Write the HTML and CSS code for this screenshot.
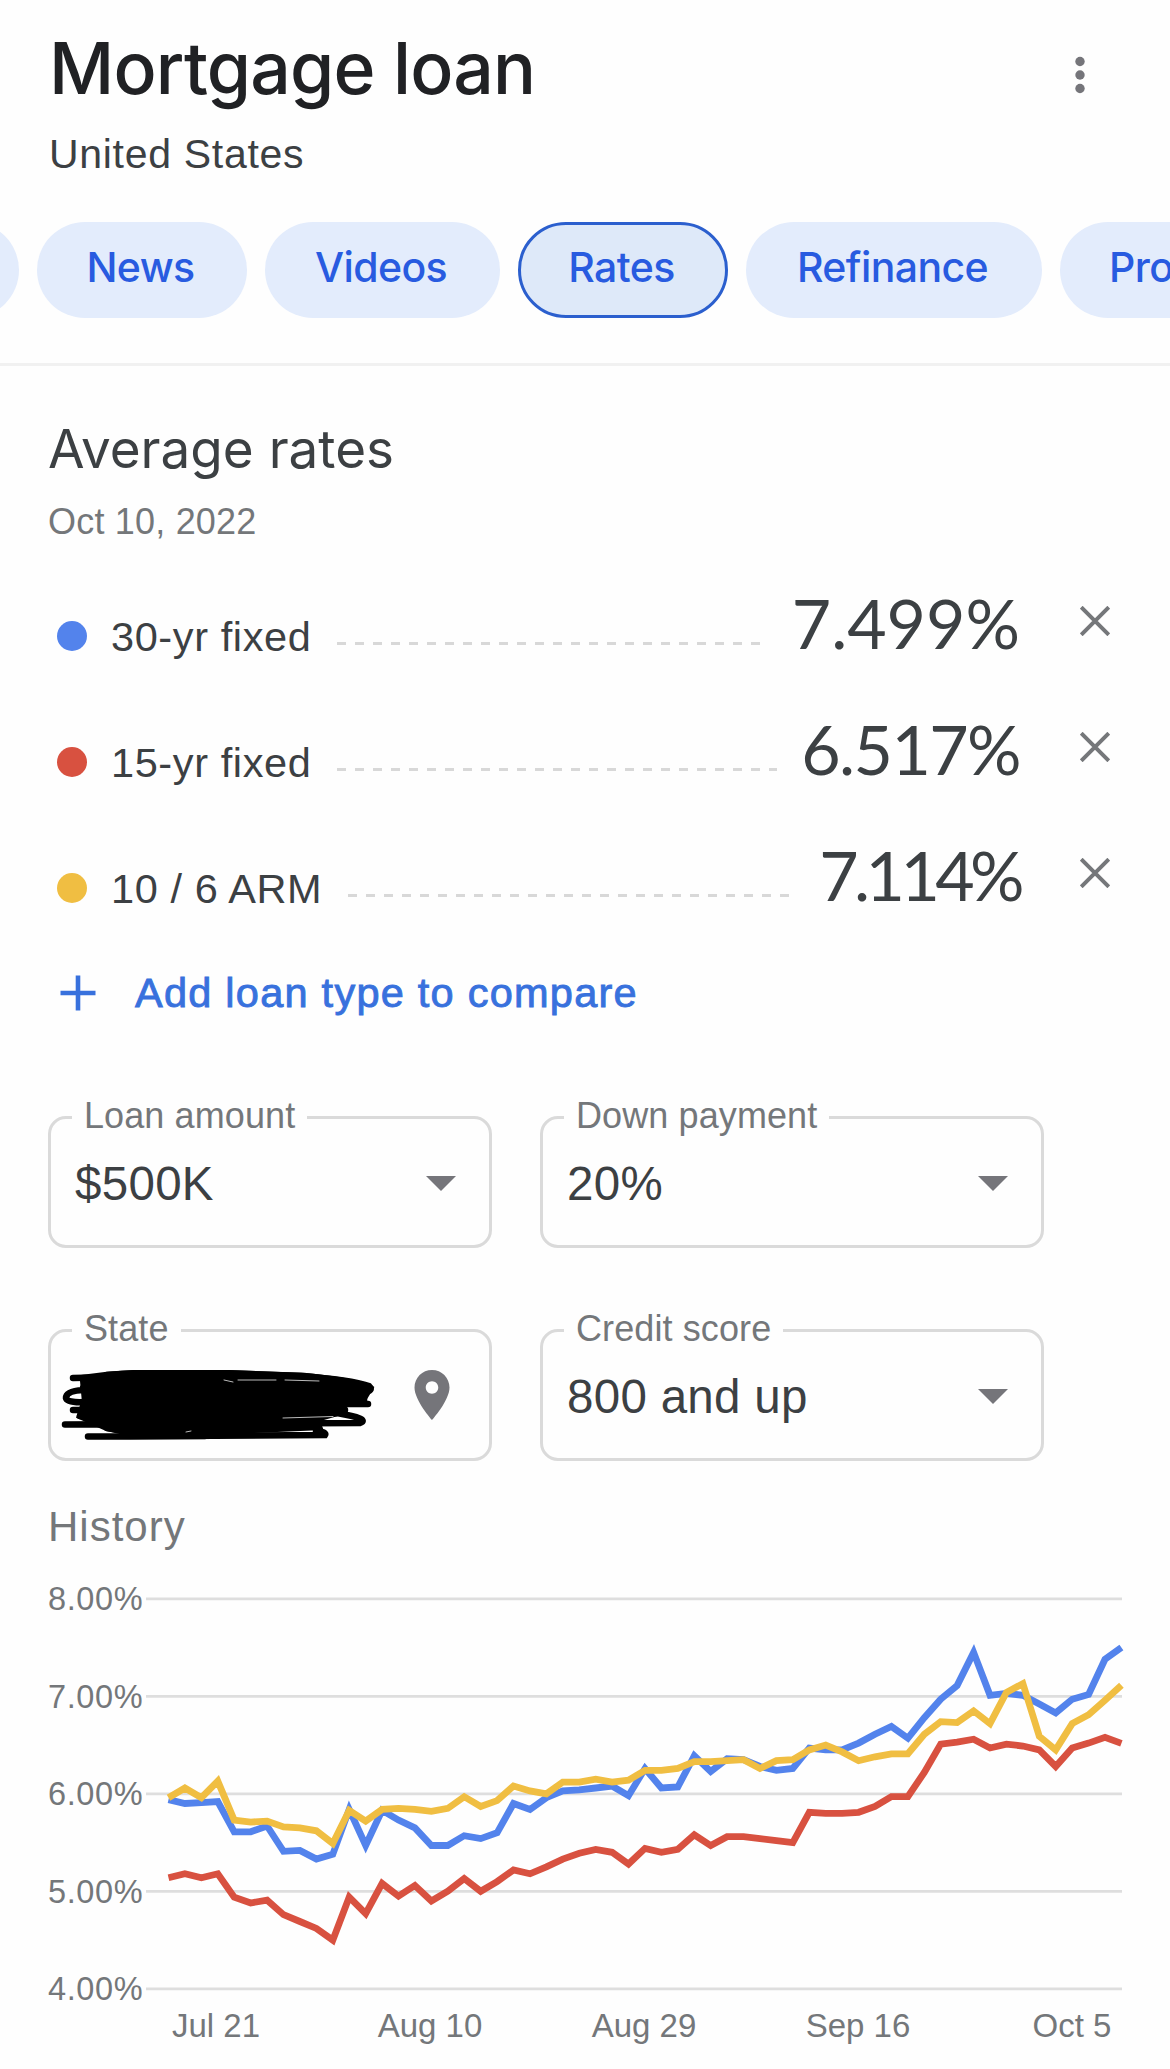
FILE: index.html
```html
<!DOCTYPE html>
<html lang="en">
<head>
    <meta charset="UTF-8">
    <meta name="viewport" content="width=device-width, initial-scale=1.0">
    <title>Mortgage loan</title>
    <link rel="stylesheet" href="styles.css">
</head>
<body>
    <header class="header">
        <div>
            <h1>Mortgage loan</h1>
            <p class="region">United States</p>
        </div>
        <svg class="menu-icon" width="10" height="38" viewBox="0 0 10 38">
            <circle cx="5" cy="5.5" r="4.7"/>
            <circle cx="5" cy="19" r="4.7"/>
            <circle cx="5" cy="32.5" r="4.7"/>
        </svg>
    </header>

    <nav class="chips">
        <a class="chip"></a>
        <a class="chip chip-sm">News</a>
        <a class="chip chip-md">Videos</a>
        <a class="chip chip-sm active">Rates</a>
        <a class="chip chip-lg">Refinance</a>
        <a class="chip chip-last">Pro</a>
    </nav>

    <main class="content">
        <h2>Average rates</h2>
        <p class="date">Oct 10, 2022</p>

        <div class="rates">
            <div class="rate-row">
                <span class="dot blue"></span>
                <span class="rate-name">30-yr fixed</span>
                <span class="leader"></span>
                <span class="rate-value">7.499%</span>
                <svg class="close" width="30" height="30" viewBox="0 0 30 30"><path d="M1.2 1.2L28.8 28.8M28.8 1.2L1.2 28.8"/></svg>
            </div>
            <div class="rate-row">
                <span class="dot red"></span>
                <span class="rate-name">15-yr fixed</span>
                <span class="leader"></span>
                <span class="rate-value tight">6.517%</span>
                <svg class="close" width="30" height="30" viewBox="0 0 30 30"><path d="M1.2 1.2L28.8 28.8M28.8 1.2L1.2 28.8"/></svg>
            </div>
            <div class="rate-row">
                <span class="dot yellow"></span>
                <span class="rate-name">10 / 6 ARM</span>
                <span class="leader"></span>
                <span class="rate-value tighter">7.114%</span>
                <svg class="close" width="30" height="30" viewBox="0 0 30 30"><path d="M1.2 1.2L28.8 28.8M28.8 1.2L1.2 28.8"/></svg>
            </div>
        </div>

        <a class="add-loan">
            <svg width="36" height="36" viewBox="0 0 36 36"><path d="M18 .5V35.5M.5 18H35.5"/></svg>
            <span>Add loan type to compare</span>
        </a>

        <form class="fields">
            <fieldset class="field">
                <legend>Loan amount</legend>
                <div class="field-body">
                    <span>$500K</span>
                    <svg class="arrow" width="30" height="15" viewBox="0 0 30 15"><path d="M0 0H30L15 15Z"/></svg>
                </div>
            </fieldset>
            <fieldset class="field">
                <legend>Down payment</legend>
                <div class="field-body">
                    <span>20%</span>
                    <svg class="arrow" width="30" height="15" viewBox="0 0 30 15"><path d="M0 0H30L15 15Z"/></svg>
                </div>
            </fieldset>
            <fieldset class="field">
                <legend>State</legend>
                <div class="field-body state-body">
                    <svg class="scribble" width="315" height="72" viewBox="0 0 315 72">
                        <path class="ink" d="M22 8L46 5Q110 0 160 3L243 6Q300 12 309 18L303 28L285 32L276 43L255 49L258 57L140 62L60 61L46 58L19 46L24 30Z"/>
                        <path d="M12 8L60 7M46 5Q100 1 160 3L240 6Q290 10 308 16Q313 21 303 22L22 18M303 22V29L40 27M22 20Q5 21 5 28Q6 33 24 32M307 34L30 34M12 40L284 40M19 46L276 43Q310 49 299 53L4 54.5M46 58Q70 62 100 61L257 56M27 66.5L264 65Q266 62 255 61M27 66.5H144"/>
                        <path class="gap" d="M163 10L172 12M177 10L215 10M224 10L258 11M222 48L272 46.5M125 62L130 61"/>
                    </svg>
                    <svg class="pin" width="36" height="50" viewBox="5 2 14 20"><path d="M12 2C8.13 2 5 5.13 5 9c0 5.25 7 13 7 13s7-7.75 7-13c0-3.87-3.13-7-7-7zm0 9.5c-1.38 0-2.5-1.12-2.5-2.5s1.12-2.5 2.5-2.5 2.5 1.12 2.5 2.5-1.12 2.5-2.5 2.5z"/></svg>
                </div>
            </fieldset>
            <fieldset class="field">
                <legend>Credit score</legend>
                <div class="field-body">
                    <span>800 and up</span>
                    <svg class="arrow" width="30" height="15" viewBox="0 0 30 15"><path d="M0 0H30L15 15Z"/></svg>
                </div>
            </fieldset>
        </form>

        <h3>History</h3>
    </main>

    <svg class="chart" id="chart" width="1170" height="516" viewBox="0 0 1170 516"></svg>

    <script>
        const series = [
            { name: 'blue', rates: [5.94, 5.90, 5.91, 5.92, 5.61, 5.61, 5.67, 5.41, 5.42, 5.33, 5.38, 5.84, 5.47, 5.83, 5.73, 5.65, 5.47, 5.47, 5.57, 5.54, 5.60, 5.90, 5.84, 5.96, 6.03, 6.04, 6.06, 6.08, 5.98, 6.26, 6.06, 6.07, 6.39, 6.23, 6.36, 6.35, 6.28, 6.24, 6.26, 6.47, 6.45, 6.45, 6.52, 6.61, 6.69, 6.57, 6.78, 6.97, 7.11, 7.45, 7.01, 7.03, 7.01, 6.92, 6.83, 6.97, 7.02, 7.38, 7.499] },
            { name: 'red', rates: [5.14, 5.18, 5.14, 5.18, 4.94, 4.88, 4.91, 4.76, 4.69, 4.62, 4.50, 4.94, 4.77, 5.08, 4.95, 5.06, 4.90, 5.00, 5.13, 5.00, 5.10, 5.22, 5.18, 5.25, 5.33, 5.39, 5.43, 5.40, 5.28, 5.44, 5.40, 5.43, 5.58, 5.47, 5.56, 5.56, 5.54, 5.52, 5.50, 5.81, 5.80, 5.80, 5.81, 5.87, 5.97, 5.97, 6.22, 6.51, 6.53, 6.56, 6.47, 6.51, 6.49, 6.45, 6.28, 6.47, 6.52, 6.58, 6.517] },
            { name: 'yellow', rates: [5.96, 6.06, 5.96, 6.13, 5.73, 5.71, 5.72, 5.66, 5.65, 5.62, 5.49, 5.83, 5.72, 5.84, 5.85, 5.84, 5.82, 5.85, 5.97, 5.87, 5.93, 6.08, 6.03, 6.00, 6.12, 6.12, 6.15, 6.12, 6.14, 6.24, 6.24, 6.26, 6.33, 6.33, 6.34, 6.35, 6.26, 6.34, 6.35, 6.45, 6.50, 6.43, 6.34, 6.38, 6.41, 6.41, 6.61, 6.74, 6.73, 6.85, 6.72, 7.04, 7.13, 6.59, 6.45, 6.72, 6.81, 6.96, 7.114] }
        ];
        const dates = [['Jul 21', 216], ['Aug 10', 430], ['Aug 29', 644], ['Sep 16', 858], ['Oct 5', 1072]];

        const left = 168.5;
        const step = 16.43;
        const y = rate => 46.8 + (8 - rate) * 97.5;

        let svg = '';
        for (let rate = 8; rate >= 4; rate--) {
            svg += `<line class="grid" x1="146" x2="1122" y1="${y(rate)}" y2="${y(rate)}"/>`;
            svg += `<text class="y-label" x="48" y="${y(rate) + 11.5}">${rate.toFixed(2)}%</text>`;
        }
        for (const s of series) {
            const points = s.rates.map((r, i) => `${(left + i * step).toFixed(1)},${y(r).toFixed(1)}`).join(' ');
            svg += `<polyline class="line ${s.name}" points="${points}"/>`;
        }
        for (const [label, x] of dates) {
            svg += `<text class="x-label" x="${x}" y="485">${label}</text>`;
        }
        document.getElementById('chart').innerHTML = svg;
    </script>
</body>
</html>
```
FILE: styles.css
```css
* {
    margin: 0;
    padding: 0;
    box-sizing: border-box;
}

body {
    width: 1170px;
    background: #fefefe;
    font-family: "Liberation Sans", Arial, sans-serif;
    color: #3c4043;
    overflow: hidden;
}

.header {
    display: flex;
    justify-content: space-between;
    height: 222px;
    padding: 28px 85px 0 49px;
}

h1 {
    font-family: Inter, sans-serif;
    font-size: 71.5px;
    font-weight: 500;
    line-height: 80px;
    letter-spacing: -0.8px;
    color: #202124;
}

.region {
    margin-top: 22px;
    font-size: 41px;
    line-height: 48px;
    letter-spacing: 0.7px;
}

.menu-icon {
    margin-top: 28px;
    fill: #75757a;
}

.chips {
    display: flex;
    gap: 18px;
    height: 144px;
    margin-left: -101px;
    overflow: hidden;
    border-bottom: 3px solid #f1f1f1;
}

.chip {
    flex: none;
    width: 120px;
    height: 96px;
    padding: 0 3px 5px 0;
    border-radius: 48px;
    background: #e3ecfc;
    font-family: Inter, sans-serif;
    font-size: 41px;
    font-weight: 500;
    line-height: 91px;
    letter-spacing: -0.6px;
    text-align: center;
    color: #285be0;
}

.chip-sm {
    width: 210px;
}

.chip-md {
    width: 235px;
}

.chip-lg {
    width: 296px;
}

/* runs off the right edge of the carousel */
.chip-last {
    width: 210px;
    padding-left: 49px;
    text-align: left;
}

.chip.active {
    background: #dee9f9;
    border: 3px solid #2b5fce;
    line-height: 85px;
}

.content {
    padding: 53px 0 0 48px;
}

h2 {
    font-family: Inter, sans-serif;
    font-size: 53px;
    font-weight: 400;
    line-height: 60px;
}

.date {
    margin-top: 21px;
    font-size: 36px;
    line-height: 44px;
    letter-spacing: 0.2px;
    color: #74777a;
}

.rates {
    margin-top: 29px;
}

.rate-row {
    display: flex;
    align-items: center;
    height: 126px;
    padding: 0 60px 0 9px;
}

.dot {
    width: 30px;
    height: 30px;
    margin-right: 24px;
    border-radius: 50%;
}

.dot.blue {
    background: #5383ec;
}

.dot.red {
    background: #d85140;
}

.dot.yellow {
    background: #f0be42;
}

.rate-name {
    font-size: 41.5px;
    line-height: 48px;
    letter-spacing: 0.6px;
    padding-top: 1px;
}

.leader {
    flex: 1;
    height: 3px;
    margin: 15px 24px 0 26px;
    background: repeating-linear-gradient(90deg, #d8d8d8 0 9px, transparent 9px 18px);
}

.rate-value {
    margin-right: -2px;
    padding-bottom: 26px;
    font-family: Lato, sans-serif;
    font-size: 68px;
    line-height: 80px;
}

.rate-value.tight {
    margin-right: -4px;
    letter-spacing: -1.6px;
}

.rate-value.tighter {
    letter-spacing: -4.6px;
}

.close {
    margin: 0 0 30px auto;
    stroke: #75777a;
    stroke-width: 4;
}

.rate-value + .close {
    margin-left: 62px;
}

.rate-value.tight + .close {
    margin-left: 64px;
}

.add-loan {
    display: flex;
    align-items: center;
    gap: 39px;
    height: 84px;
    padding-left: 12px;
    font-size: 41.5px;
    letter-spacing: 1.25px;
    color: #3871dd;
    -webkit-text-stroke: 0.9px #3871dd;
}

.add-loan svg {
    stroke: #3871dd;
    stroke-width: 4.6;
}

.fields {
    display: grid;
    grid-template-columns: 444px 504px;
    gap: 60px 48px;
    margin-top: 60px;
}

.field {
    height: 153px;
    min-width: 0;
    border: 3px solid #dadada;
    border-radius: 18px;
}

.field legend {
    margin-left: 21px;
    padding: 0 12px 3px 12px;
    font-size: 36px;
    line-height: 41px;
    letter-spacing: 0.1px;
    color: #74777a;
}

.field-body {
    display: flex;
    align-items: center;
    justify-content: space-between;
    height: 89px;
    padding: 0 33px 0 24px;
    font-size: 47.5px;
    letter-spacing: 0.3px;
}

.arrow,
.pin {
    fill: #75757a;
}

.state-body {
    padding: 0 39px 0 10px;
}

.scribble {
    margin-top: 18px;
    fill: none;
    stroke: #000;
    stroke-width: 6.5;
    stroke-linecap: round;
}

.scribble .ink {
    fill: #000;
}

.scribble .gap {
    stroke: #bbb;
    stroke-width: 1;
}

.pin {
    margin-bottom: 3px;
}

h3 {
    margin-top: 41px;
    font-size: 42px;
    font-weight: 400;
    line-height: 50px;
    letter-spacing: 1px;
    color: #74777a;
}

.chart {
    display: block;
}

.chart text {
    fill: #74777a;
}

.chart .grid {
    stroke: #dedede;
    stroke-width: 2.7;
}

.y-label {
    font-size: 32.5px;
    letter-spacing: 0.6px;
}

.x-label {
    font-size: 33px;
    text-anchor: middle;
}

.line {
    fill: none;
    stroke-width: 6.8;
}

.line.blue {
    stroke: #5383ec;
}

.line.red {
    stroke: #d85140;
}

.line.yellow {
    stroke: #f0be42;
}
```
